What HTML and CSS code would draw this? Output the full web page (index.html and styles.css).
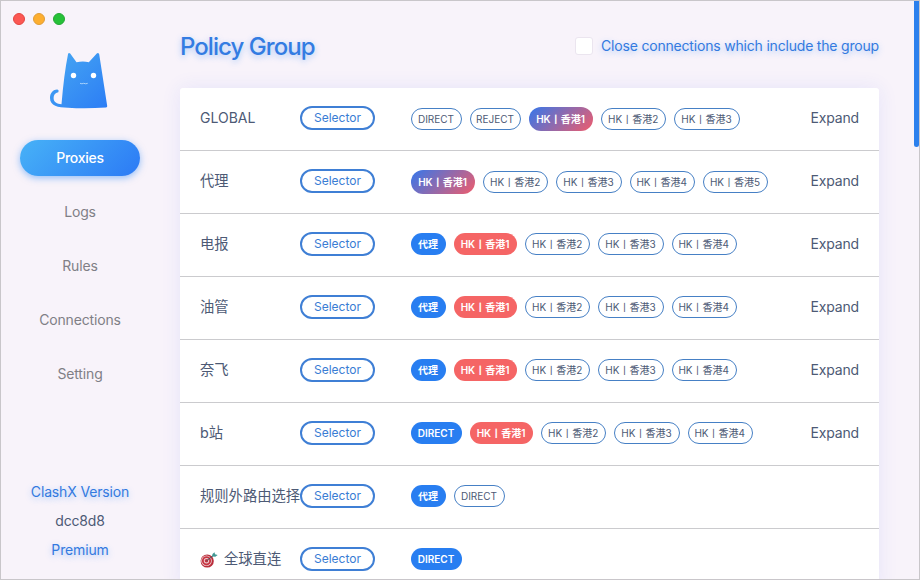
FILE: index.html
```html
<!DOCTYPE html>
<html lang="zh-CN">
<head>
<meta charset="utf-8">
<title>ClashX</title>
<link rel="stylesheet" href="styles.css">
</head>
<body>
<div class="window">
  <aside class="sidebar">
    <div class="lights"><i class="light red"></i><i class="light amber"></i><i class="light green"></i></div>
    <svg class="logo" width="60" height="60" viewBox="0 0 60 60">
      <defs><linearGradient id="fur" x1="0" y1="0" x2="1" y2="1"><stop offset="0" stop-color="#47a8f2"/><stop offset="1" stop-color="#2c7df5"/></linearGradient></defs>
      <path fill="url(#fur)" d="M18 4.2Q18.600 2.200 20.200 3.600L26.500 12.300Q33 10.800 38.800 12.300L46.800 3.600Q48.200 2.300 49.200 4.300L57.200 56Q57.400 57.200 56 57.500Q36 59 18 57.800C8 57.500 0 56 0 48C0 42.500 3.500 39.800 7 39.600Q9.300 39.800 8.300 42.200C5 42.600 3.600 45 3.600 48C3.600 52 7 54 11.500 54.300Q14 24 18 4.200Z"/>
      <circle cx="23.500" cy="25.500" r="2.700" fill="#fff"/><circle cx="43.500" cy="25.500" r="2.700" fill="#fff"/>
      <path d="M30 33.300q2 1 3.700 0q2 1 4 0" fill="none" stroke="#a8d2fc" stroke-width="1"/>
    </svg>
    <nav class="menu">
      <a class="item active">Proxies</a>
      <a class="item">Logs</a>
      <a class="item">Rules</a>
      <a class="item">Connections</a>
      <a class="item">Setting</a>
    </nav>
    <div class="version">
      <span class="glow">ClashX Version</span>
      <span>dcc8d8</span>
      <span class="glow">Premium</span>
    </div>
  </aside>
  <main class="page">
    <header class="header">
      <h1 class="title">Policy Group</h1>
      <label class="option"><i class="checkbox"></i><span>Close connections which include the group</span></label>
    </header>
    <section class="card">
      <div class="row"><span class="name latin">GLOBAL</span><span class="type">Selector</span><div class="tags"><span class="tag word">DIRECT</span><span class="tag word">REJECT</span><span class="tag node both">HK丨香港1</span><span class="tag node">HK丨香港2</span><span class="tag node">HK丨香港3</span></div><a class="expand">Expand</a></div>
      <div class="row"><span class="name">代理</span><span class="type">Selector</span><div class="tags"><span class="tag node both">HK丨香港1</span><span class="tag node">HK丨香港2</span><span class="tag node">HK丨香港3</span><span class="tag node">HK丨香港4</span><span class="tag node">HK丨香港5</span></div><a class="expand">Expand</a></div>
      <div class="row"><span class="name">电报</span><span class="type">Selector</span><div class="tags"><span class="tag short now">代理</span><span class="tag node error">HK丨香港1</span><span class="tag node">HK丨香港2</span><span class="tag node">HK丨香港3</span><span class="tag node">HK丨香港4</span></div><a class="expand">Expand</a></div>
      <div class="row"><span class="name">油管</span><span class="type">Selector</span><div class="tags"><span class="tag short now">代理</span><span class="tag node error">HK丨香港1</span><span class="tag node">HK丨香港2</span><span class="tag node">HK丨香港3</span><span class="tag node">HK丨香港4</span></div><a class="expand">Expand</a></div>
      <div class="row"><span class="name">奈飞</span><span class="type">Selector</span><div class="tags"><span class="tag short now">代理</span><span class="tag node error">HK丨香港1</span><span class="tag node">HK丨香港2</span><span class="tag node">HK丨香港3</span><span class="tag node">HK丨香港4</span></div><a class="expand">Expand</a></div>
      <div class="row"><span class="name">b站</span><span class="type">Selector</span><div class="tags"><span class="tag word now">DIRECT</span><span class="tag node error">HK丨香港1</span><span class="tag node">HK丨香港2</span><span class="tag node">HK丨香港3</span><span class="tag node">HK丨香港4</span></div><a class="expand">Expand</a></div>
      <div class="row"><span class="name">规则外路由选择</span><span class="type">Selector</span><div class="tags"><span class="tag short now">代理</span><span class="tag word">DIRECT</span></div></div>
      <div class="row"><span class="name"><svg class="target" width="18" height="16" viewBox="0 0 18 16"><ellipse cx="7.200" cy="9" rx="6.600" ry="6.600" fill="#b92d3b"/><circle cx="6.500" cy="8.800" r="5.300" fill="#eedcdb"/><circle cx="6.500" cy="8.800" r="4.600" fill="#c83443"/><circle cx="6.500" cy="8.800" r="2.700" fill="#ecd2d2"/><circle cx="6.500" cy="8.800" r="1.800" fill="#c83443"/><path d="M6.500 8.800L13 3.800" stroke="#46545c" stroke-width="1"/><path d="M12 4.500L12.500 2L14.500 .3L15 2.300L17.700 3L15.300 4.800Z" fill="#439894"/></svg>全球直连</span><span class="type">Selector</span><div class="tags"><span class="tag word now">DIRECT</span></div></div>
    </section>
  </main>
  <div class="scrollbar"></div>
</div>
</body>
</html>
```

FILE: styles.css
```css
* { box-sizing: border-box; }
body {
  margin: 0;
  font-family: Inter, "Noto Sans CJK SC", sans-serif;
  font-size: 14px;
  letter-spacing: -.15px;
  color: #4d5a75;
}
.window {
  position: relative;
  display: flex;
  width: 920px;
  height: 580px;
  overflow: hidden;
  border: 1px solid #c9c6ca;
  background: #f8f3fa;
}
.sidebar {
  width: 158px;
  height: 578px;
  display: flex;
  flex-direction: column;
  align-items: center;
  flex: none;
}
.lights { display: flex; gap: 8px; align-self: flex-start; padding: 12px 0 0 12px; }
.light { width: 12px; height: 12px; border-radius: 50%; }
.red { background: #fc5753; border: 1px solid #e34541; }
.amber { background: #fdae30; border: 1px solid #df9d38; }
.green { background: #26c138; border: 1px solid #25a735; }
.logo { margin: 25px 0 0; }
.menu { display: flex; flex-direction: column; gap: 18px; margin-top: 30px; }
.item {
  width: 120px;
  height: 36px;
  border-radius: 18px;
  line-height: 36px;
  text-align: center;
  color: #807f86;
}
.active {
  color: #fff;
  font-weight: 500;
  letter-spacing: -.25px;
  background: linear-gradient(135deg, #47b2f7, #2c7af5);
  box-shadow: 0 2px 7px rgba(44, 138, 248, .5);
}
.version {
  margin-top: auto;
  padding-bottom: 15px;
  display: flex;
  flex-direction: column;
  align-items: center;
  line-height: 29px;
}
.glow { color: #337ae0; text-shadow: 0 2px 6px rgba(44, 138, 248, .4); }
.page { width: 699px; margin-left: 21px; flex: none; }
.header { height: 87px; display: flex; align-items: flex-start; justify-content: space-between; }
.title {
  margin: 30px 0 0;
  font-size: 24px;
  line-height: 32px;
  font-weight: 500;
  letter-spacing: -.950px;
  color: #337ce2;
  text-shadow: 0 2px 6px rgba(44, 138, 248, .4);
}
.option {
  display: flex;
  align-items: center;
  gap: 8px;
  margin-top: 35px;
  line-height: 20px;
  letter-spacing: -.19px;
  color: #337ae0;
  text-shadow: 0 2px 6px rgba(44, 138, 248, .4);
}
.checkbox { width: 18px; height: 18px; background: #fff; border-radius: 3px; border: 1px solid #ebe5ef; }
.card {
  background: #fff;
  border-radius: 3px;
  box-shadow: 0 0 20px rgba(44, 75, 248, .09);
}
.row {
  height: 63px;
  padding: 0 20px;
  display: flex;
  align-items: center;
  border-bottom: 1px solid #cbcbce;
}
.name { width: 100px; flex: none; padding-bottom: 2px; white-space: nowrap; font-size: 14.300px; letter-spacing: 0; line-height: 20px; }
.latin { font-size: 14px; padding-bottom: 3px; }
.target { margin-right: 6px; vertical-align: -4px; }
.type {
  width: 75px;
  height: 24px;
  margin: 0 36px 2px 0;
  border: 2px solid #3f7fd5;
  border-radius: 12px;
  line-height: 20px;
  font-size: 12px;
  letter-spacing: 0;
  text-align: center;
  color: #397dd4;
}
.tags { display: flex; align-self: flex-start; align-items: center; gap: 8px; margin-top: 19px; letter-spacing: 0; }
.tag {
  height: 22px;
  padding-right: 1px;
  border: 1px solid #4680c5;
  border-radius: 11px;
  line-height: 20px;
  font-size: 10px;
  text-align: center;
  white-space: nowrap;
}
.word { width: 51px; }
.node { width: 65.300px; }
.short { width: 35px; }
.now, .error, .both { border: 0; line-height: 22px; color: #fff; font-weight: 600; }
.now { background: #287ef1; }
.error { width: 63px; background: #f56565; }
.both { width: 64px; height: 24px; line-height: 24px; border-radius: 12px; background: linear-gradient(135deg, #3577eb, #ef5c6c); }
.expand { margin-left: auto; line-height: 20px; padding-bottom: 2px; }
.scrollbar {
  position: absolute;
  top: 0;
  right: 0;
  width: 5px;
  height: 146px;
  border-radius: 0 0 3px 3px;
  background: #2c80ed;
}
```
